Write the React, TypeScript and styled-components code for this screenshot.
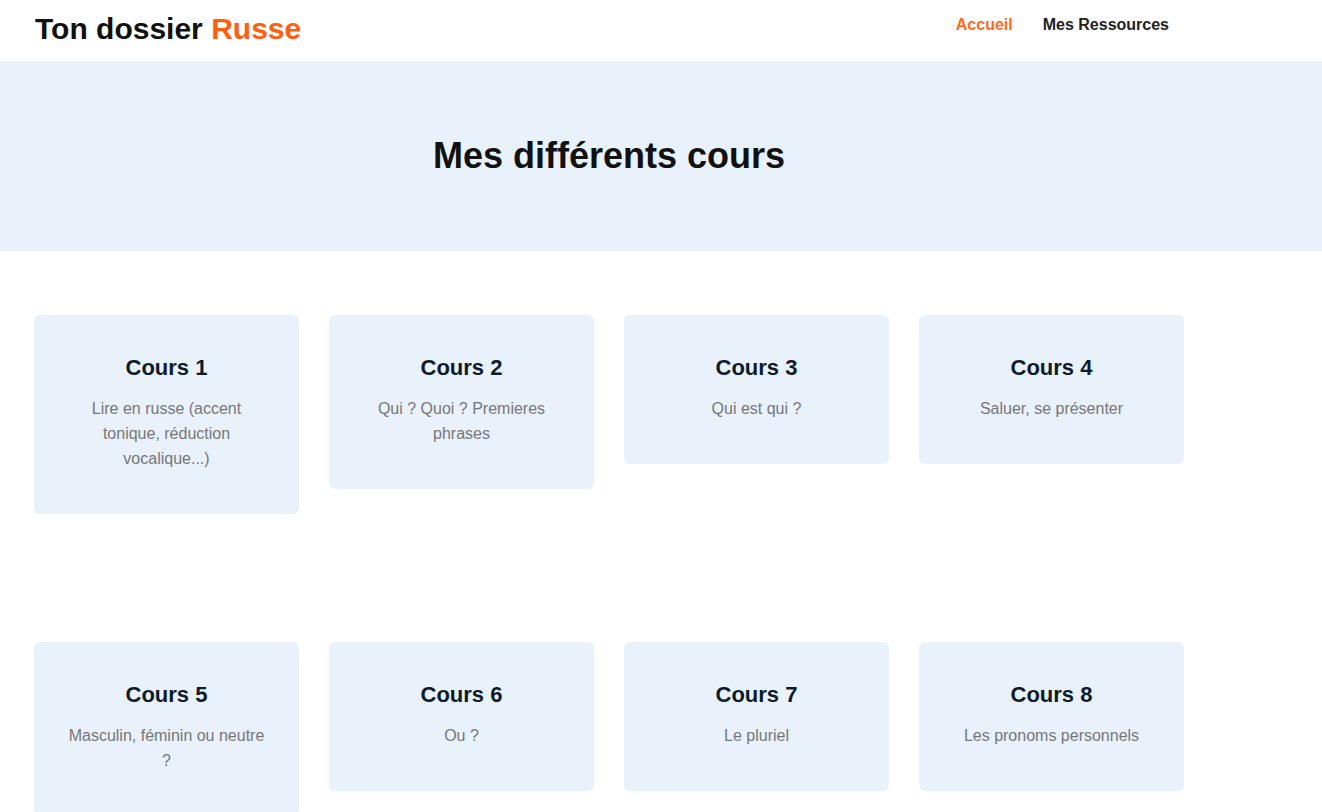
import React from "react";
import styled, { createGlobalStyle } from "styled-components";

const Global = createGlobalStyle`
  * { box-sizing: border-box; }
  body {
    margin: 0;
    font-family: "Liberation Sans", Arial, sans-serif;
    background: #ffffff;
    color: #111;
  }
`;

const Container = styled.div`
  width: 1150px;
  margin-left: 34px;
`;

const Header = styled.header`
  height: 61px;
  background: #fff;
`;

const HeaderInner = styled(Container)`
  height: 100%;
  display: flex;
  align-items: center;
  justify-content: space-between;
  padding-bottom: 4px;
`;

const Logo = styled.h1`
  margin: 0 0 0 1px;
  font-size: 30px;
  font-weight: 700;
  color: #111;
`;

const Accent = styled.span`
  color: #ff5f0f;
`;

const Nav = styled.nav`
  display: flex;
  gap: 30px;
  padding-right: 15px;
  margin-top: -8px;
`;

const NavLink = styled.a<{ $active?: boolean }>`
  font-size: 16px;
  font-weight: 700;
  text-decoration: none;
  color: ${(p) => (p.$active ? "#ff6a1f" : "#222")};
`;

const Hero = styled.section`
  height: 190px;
  background: #e9f1fb;
  display: flex;
  align-items: center;
`;

const HeroTitle = styled.h2`
  margin: 0;
  width: 100%;
  text-align: center;
  font-size: 36px;
  font-weight: 700;
  color: #111;
`;

const Section = styled.section`
  padding: 64px 0;
`;

const Grid = styled.div`
  display: grid;
  grid-template-columns: repeat(4, 265px);
  column-gap: 30px;
  align-items: start;
`;

const Card = styled.div`
  background: #e9f1fb;
  border-radius: 6px;
  padding: 41px 30px 43px;
  text-align: center;
`;

const CardTitle = styled.h3`
  margin: 0 0 16px;
  font-size: 22px;
  line-height: 24px;
  font-weight: 700;
  color: #0d1b2a;
`;

const CardText = styled.p`
  margin: 0;
  font-size: 16px;
  line-height: 25px;
  color: #777;
`;

const rows = [
  [
    ["Cours 1", "Lire en russe (accent tonique, réduction vocalique...)"],
    ["Cours 2", "Qui ? Quoi ? Premieres phrases"],
    ["Cours 3", "Qui est qui ?"],
    ["Cours 4", "Saluer, se présenter"],
  ],
  [
    ["Cours 5", "Masculin, féminin ou neutre ?"],
    ["Cours 6", "Ou ?"],
    ["Cours 7", "Le pluriel"],
    ["Cours 8", "Les pronoms personnels"],
  ],
];

export default function App() {
  return (
    <>
      <Global />
      <Header>
        <HeaderInner>
          <Logo>
            Ton dossier <Accent>Russe</Accent>
          </Logo>
          <Nav>
            <NavLink href="#" $active>
              Accueil
            </NavLink>
            <NavLink href="#">Mes Ressources</NavLink>
          </Nav>
        </HeaderInner>
      </Header>
      <Hero>
        <Container>
          <HeroTitle>Mes différents cours</HeroTitle>
        </Container>
      </Hero>
      {rows.map((row, i) => (
        <Section key={i}>
          <Container>
            <Grid>
              {row.map(([t, d]) => (
                <Card key={t}>
                  <CardTitle>{t}</CardTitle>
                  <CardText>{d}</CardText>
                </Card>
              ))}
            </Grid>
          </Container>
        </Section>
      ))}
    </>
  );
}
